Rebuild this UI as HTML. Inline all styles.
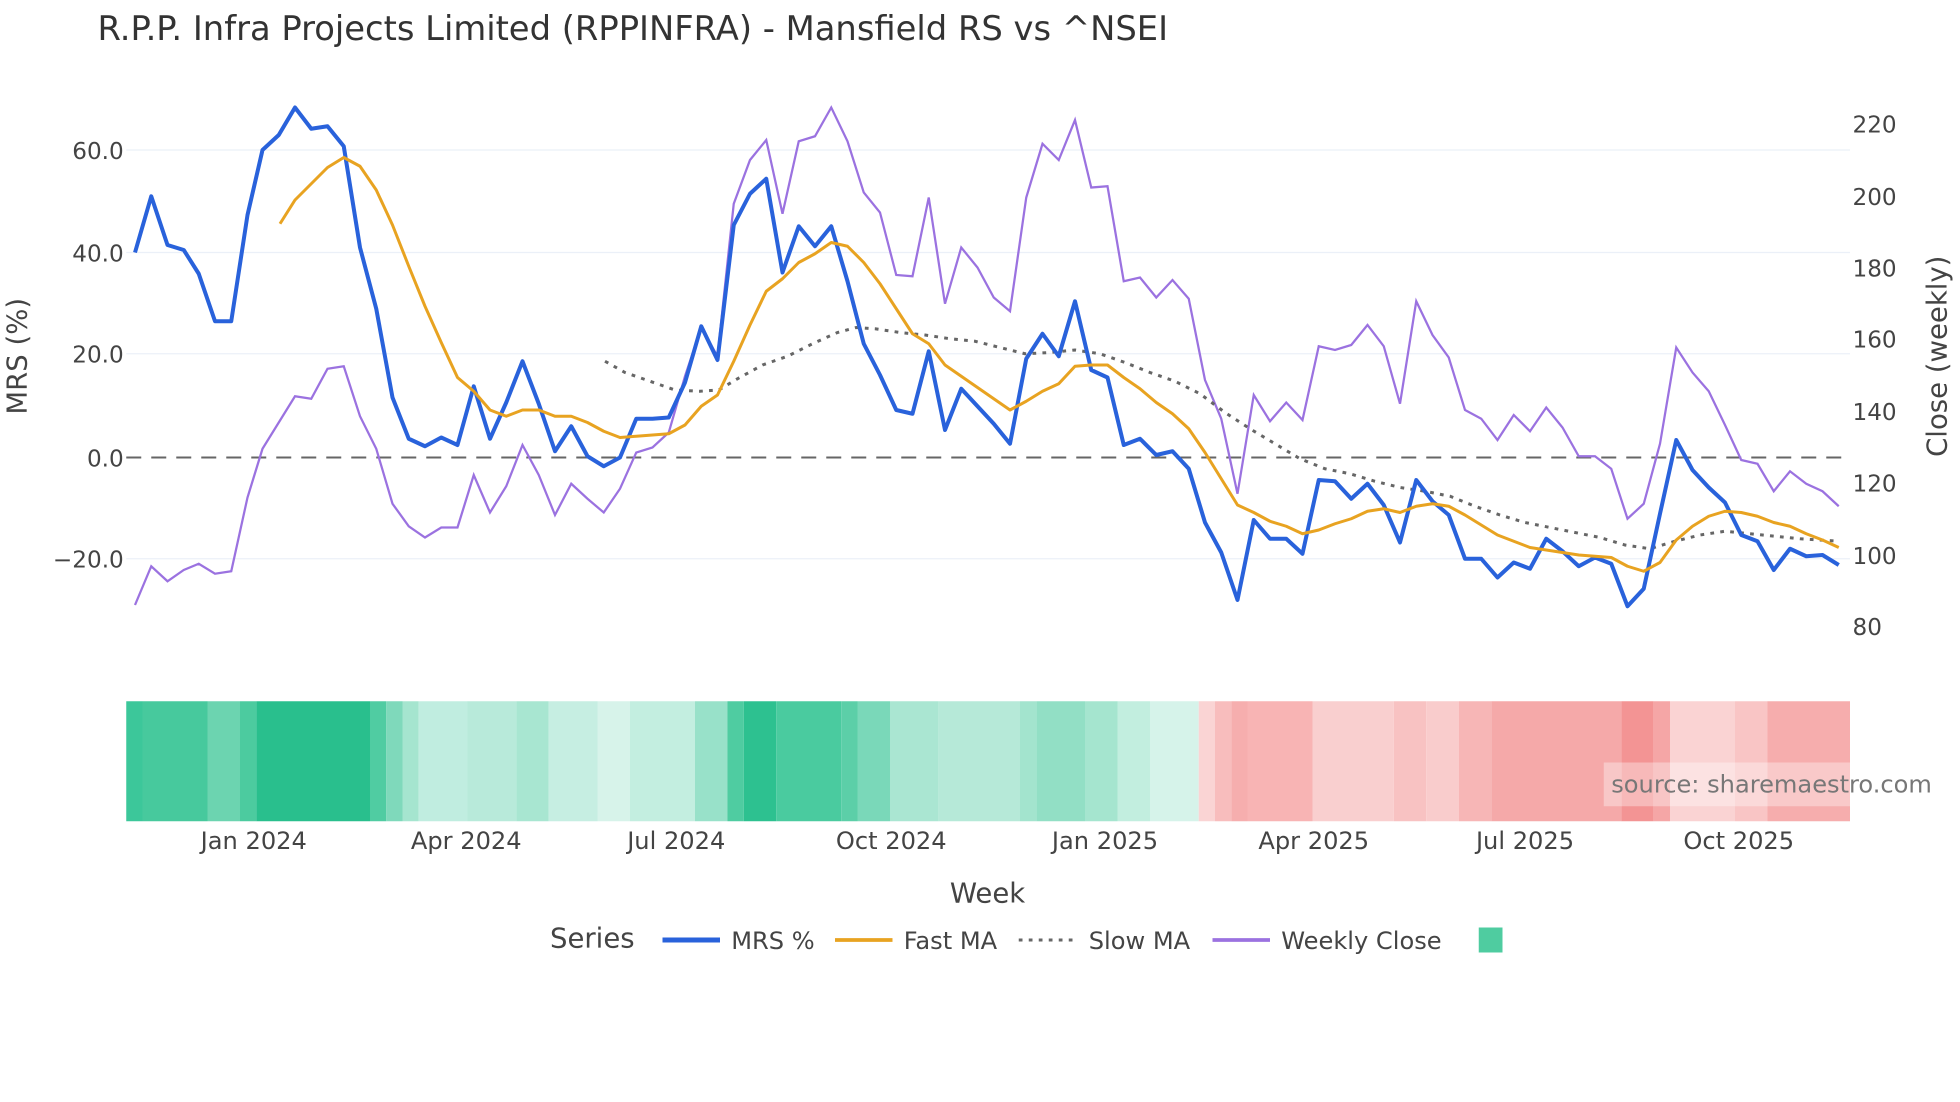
<!DOCTYPE html>
<html><head><meta charset="utf-8"><style>
html,body{margin:0;padding:0;background:#fff;}
svg{display:block;}
text{font-family:"DejaVu Sans","Liberation Sans",sans-serif;}
</style></head><body>
<svg width="1960" height="1102" viewBox="0 0 1568 881.6" xmlns="http://www.w3.org/2000/svg">
<rect width="1568" height="881.6" fill="#fff"/>
<text x="78" y="32" font-size="27" fill="#333">R.P.P. Infra Projects Limited (RPPINFRA) - Mansfield RS vs ^NSEI</text>
<g stroke="#ebf0f8" stroke-width="1">
<line x1="101" y1="120" x2="1480" y2="120"/><line x1="101" y1="202" x2="1480" y2="202"/>
<line x1="101" y1="283" x2="1480" y2="283"/><line x1="101" y1="447" x2="1480" y2="447"/>
</g>
<line x1="101" y1="366" x2="1480" y2="366" stroke="#666" stroke-width="1.6" stroke-dasharray="12,8"/>
<g font-size="18.5" fill="#444" text-anchor="end">
<text x="99" y="127">60.0</text><text x="99" y="209">40.0</text><text x="99" y="290">20.0</text>
<text x="99" y="373">0.0</text><text x="99" y="454">−20.0</text>
</g>
<g font-size="18.5" fill="#444">
<text x="1482" y="106">220</text><text x="1482" y="164">200</text><text x="1482" y="221">180</text>
<text x="1482" y="278">160</text><text x="1482" y="336">140</text><text x="1482" y="393">120</text>
<text x="1482" y="451">100</text><text x="1482" y="508">80</text>
</g>
<text transform="translate(21,285) rotate(-90)" font-size="22" fill="#444" text-anchor="middle">MRS (%)</text>
<text transform="translate(1557,285) rotate(-90)" font-size="22" fill="#444" text-anchor="middle">Close (weekly)</text>

<polyline fill="none" stroke="#9b72e0" stroke-width="1.8" points="108,484 121,453 134,465 147,456 159,451 172,459 185,457 198,398 210,359 223,338 236,317 249,319 262,295 275,293 288,333 301,359 314,403 327,421 340,430 353,422 366,422 379,380 392,410 405,389 418,356 431,380 444,412 457,387 470,399 483,410 496,391 509,362 522,358 535,346 548,301 561,262 574,285 587,163 600,128 613,112 626,171 639,113 652,109 665,86 678,113 691,154 704,170 717,220 730,221 743,158 756,243 769,198 782,214 795,238 808,249 821,158 834,115 847,128 860,96 873,150 886,149 899,225 912,222 925,238 938,224 951,239 964,304 977,335 990,395 1003,316 1016,337 1029,322 1042,336 1055,277 1068,280 1081,276 1094,260 1107,277 1120,323 1133,241 1146,268 1159,286 1172,328 1185,335 1198,352 1211,332 1224,345 1237,326 1250,342 1263,365 1276,365 1289,375 1302,415 1315,403 1328,355 1341,278 1354,298 1367,313 1380,340 1393,368 1406,371 1419,393 1432,377 1445,387 1458,393 1471,405"/>
<polyline fill="none" stroke="#666" stroke-width="2.4" stroke-dasharray="3,5" points="484,289 500,298 520,305 540,312 560,313 575,312 590,303 610,292 630,285 650,275 670,266 685,262 700,263 720,266 740,268 760,271 780,273 800,278 820,283 840,282 860,280 880,283 900,290 920,298 940,305 960,315 980,330 1000,343 1020,355 1040,367 1060,375 1080,379 1100,385 1120,390 1140,393 1160,397 1180,405 1200,412 1220,418 1240,422 1260,426 1280,430 1300,436 1320,439 1340,433 1360,428 1380,425 1400,427 1420,429 1440,431 1471,433"/>
<polyline fill="none" stroke="#2962db" stroke-width="3.2" stroke-linejoin="round" points="108,202 121,157 134,196 147,200 159,219 172,257 185,257 198,172 210,120 223,108 236,86 249,103 262,101 275,117 288,198 301,247 314,318 327,351 340,357 353,350 366,356 379,309 392,351 405,322 418,289 431,323 444,361 457,341 470,365 483,373 496,366 509,335 522,335 535,334 548,306 561,261 574,288 587,180 600,155 613,143 626,218 639,181 652,197 665,181 678,225 691,275 704,300 717,328 730,331 743,281 756,344 769,311 782,325 795,339 808,355 821,287 834,267 847,285 860,241 873,296 886,302 899,356 912,351 925,364 938,361 951,375 964,418 977,442 990,480 1003,416 1016,431 1029,431 1042,443 1055,384 1068,385 1081,399 1094,387 1107,404 1120,434 1133,384 1146,401 1159,412 1172,447 1185,447 1198,462 1211,450 1224,455 1237,431 1250,441 1263,453 1276,446 1289,451 1302,485 1315,471 1328,411 1341,352 1354,376 1367,390 1380,402 1393,428 1406,433 1419,456 1432,439 1445,445 1458,444 1471,452"/>
<polyline fill="none" stroke="#e8a321" stroke-width="2.4" stroke-linejoin="round" points="224,179 236,160 249,147 262,134 275,126 288,133 301,152 314,180 327,213 340,245 353,274 366,302 379,313 392,328 405,333 418,328 431,328 444,333 457,333 470,338 483,345 496,350 509,349 522,348 535,347 548,340 561,325 574,316 587,289 600,260 613,233 626,223 639,210 652,203 665,194 678,197 691,210 704,227 717,247 730,267 743,275 756,292 769,301 782,310 795,319 808,328 821,321 834,313 847,307 860,293 873,292 886,292 899,302 912,311 925,322 938,331 951,343 964,362 977,383 990,404 1003,410 1016,417 1029,421 1042,427 1055,424 1068,419 1081,415 1094,409 1107,407 1120,410 1133,405 1146,403 1159,405 1172,412 1185,420 1198,428 1211,433 1224,438 1237,440 1250,442 1263,444 1276,445 1289,446 1302,453 1315,457 1328,450 1341,432 1354,421 1367,413 1380,409 1393,410 1406,413 1419,418 1432,421 1445,427 1458,432 1471,438"/>

<g>
<rect x="101" y="561" width="13" height="96" fill="#3cc79a"/>
<rect x="114" y="561" width="52" height="96" fill="#47c99d"/>
<rect x="166" y="561" width="26" height="96" fill="#6cd4b0"/>
<rect x="192" y="561" width="13" height="96" fill="#4ccb9f"/>
<rect x="205" y="561" width="91" height="96" fill="#29bf8d"/>
<rect x="296" y="561" width="13" height="96" fill="#50cca2"/>
<rect x="309" y="561" width="13" height="96" fill="#7fd9bb"/>
<rect x="322" y="561" width="13" height="96" fill="#a5e5cf"/>
<rect x="335" y="561" width="39" height="96" fill="#c0ede0"/>
<rect x="374" y="561" width="39" height="96" fill="#b8eada"/>
<rect x="413" y="561" width="26" height="96" fill="#a8e6d1"/>
<rect x="439" y="561" width="39" height="96" fill="#c6eee2"/>
<rect x="478" y="561" width="26" height="96" fill="#d7f3ea"/>
<rect x="504" y="561" width="52" height="96" fill="#c3eee0"/>
<rect x="556" y="561" width="26" height="96" fill="#98e1c9"/>
<rect x="582" y="561" width="13" height="96" fill="#4fcca1"/>
<rect x="595" y="561" width="26" height="96" fill="#2dc190"/>
<rect x="621" y="561" width="52" height="96" fill="#4acb9f"/>
<rect x="673" y="561" width="13" height="96" fill="#5ccfa8"/>
<rect x="686" y="561" width="26" height="96" fill="#7ad8b9"/>
<rect x="712" y="561" width="39" height="96" fill="#aae6d2"/>
<rect x="751" y="561" width="65" height="96" fill="#b6e9d8"/>
<rect x="816" y="561" width="13" height="96" fill="#a3e4ce"/>
<rect x="829" y="561" width="39" height="96" fill="#92dfc5"/>
<rect x="868" y="561" width="26" height="96" fill="#a5e5cf"/>
<rect x="894" y="561" width="26" height="96" fill="#c2eedf"/>
<rect x="920" y="561" width="39" height="96" fill="#d6f3ea"/>
<rect x="959" y="561" width="13" height="96" fill="#fad4d4"/>
<rect x="972" y="561" width="13" height="96" fill="#f8bdbd"/>
<rect x="985" y="561" width="13" height="96" fill="#f6aeae"/>
<rect x="998" y="561" width="52" height="96" fill="#f8b4b4"/>
<rect x="1050" y="561" width="65" height="96" fill="#f9cfcf"/>
<rect x="1115" y="561" width="26" height="96" fill="#f8c2c2"/>
<rect x="1141" y="561" width="26" height="96" fill="#f9cccc"/>
<rect x="1167" y="561" width="26" height="96" fill="#f7b6b6"/>
<rect x="1193" y="561" width="104" height="96" fill="#f5a9a9"/>
<rect x="1297" y="561" width="26" height="96" fill="#f39494"/>
<rect x="1323" y="561" width="13" height="96" fill="#f5a6a6"/>
<rect x="1336" y="561" width="52" height="96" fill="#fad3d3"/>
<rect x="1388" y="561" width="26" height="96" fill="#f9c5c5"/>
<rect x="1414" y="561" width="66" height="96" fill="#f6adad"/>
</g>
<rect x="1283" y="610" width="197" height="35" fill="#fff" fill-opacity="0.35"/>
<text x="1289" y="634" font-size="19.3" fill="#777">source: sharemaestro.com</text>

<g font-size="19.3" fill="#444" text-anchor="middle">
<text x="203" y="679">Jan 2024</text><text x="373" y="679">Apr 2024</text><text x="541" y="679">Jul 2024</text>
<text x="713" y="679">Oct 2024</text><text x="884" y="679">Jan 2025</text><text x="1051" y="679">Apr 2025</text>
<text x="1220" y="679">Jul 2025</text><text x="1391" y="679">Oct 2025</text>
</g>
<text x="790" y="722" font-size="22" fill="#444" text-anchor="middle">Week</text>

<text x="440" y="758" font-size="22" fill="#444">Series</text>
<line x1="530" y1="752" x2="576" y2="752" stroke="#2962db" stroke-width="4"/>
<text x="585" y="759" font-size="19.3" fill="#444">MRS %</text>
<line x1="668" y1="752" x2="714" y2="752" stroke="#e8a321" stroke-width="3"/>
<text x="723" y="759" font-size="19.3" fill="#444">Fast MA</text>
<line x1="815" y1="752" x2="858" y2="752" stroke="#666" stroke-width="2.4" stroke-dasharray="3,5"/>
<text x="871" y="759" font-size="19.3" fill="#444">Slow MA</text>
<line x1="970" y1="752" x2="1016" y2="752" stroke="#9b72e0" stroke-width="3"/>
<text x="1025" y="759" font-size="19.3" fill="#444">Weekly Close</text>
<rect x="1183" y="742" width="19" height="20" fill="#4fcca0"/>
</svg>
</body></html>
